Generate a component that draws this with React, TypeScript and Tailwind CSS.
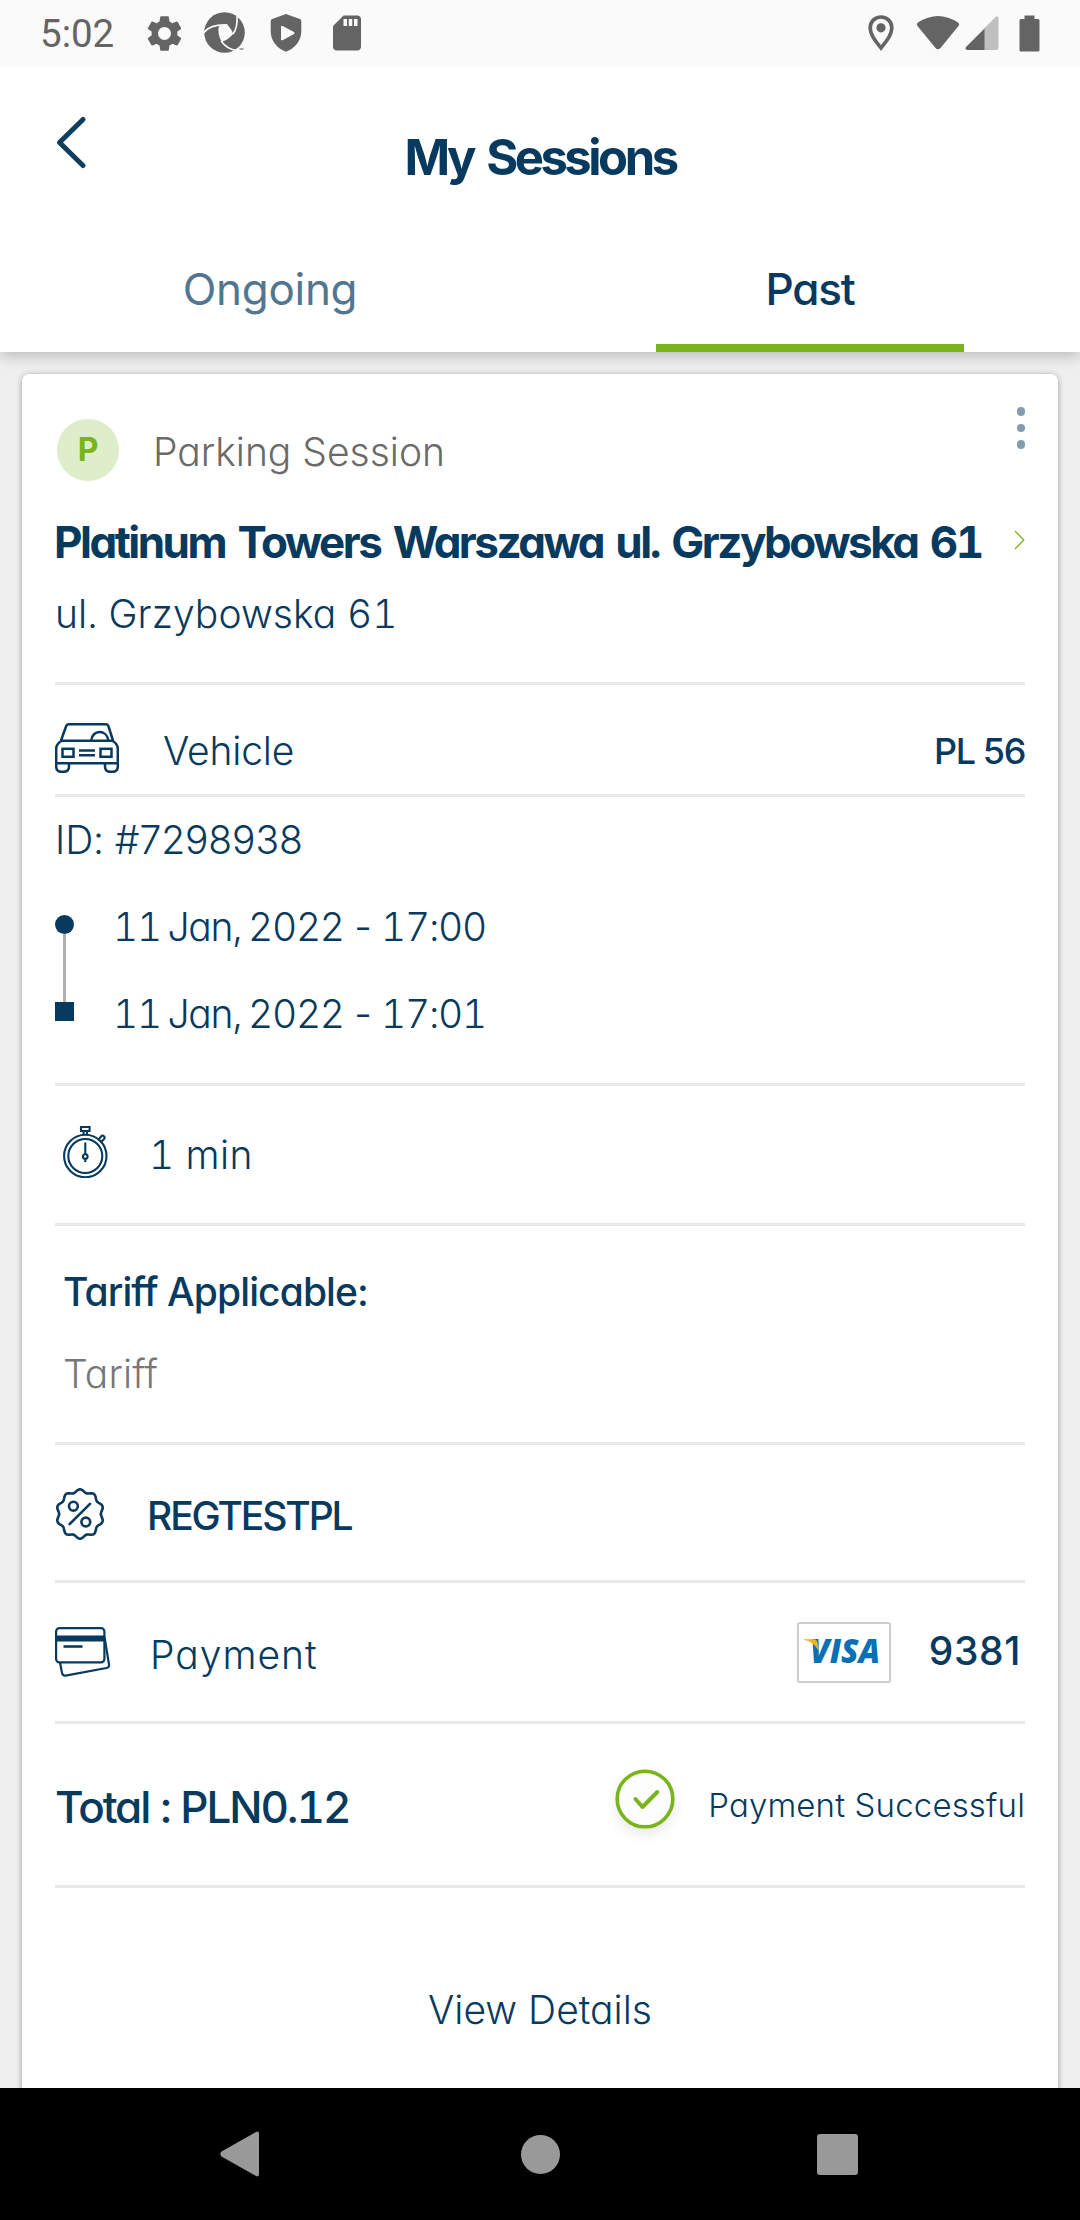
import type { ReactNode } from "react";
import { MdSdCard, MdSettings } from "react-icons/md";

const NAVY = "#073a5e";

function ApertureIcon() {
  return (
    <svg className="ml-[18px]" width="42" height="42" viewBox="0 0 42 42" fill="none">
      <circle cx="20.5" cy="20.5" r="20.3" fill="#646464" />
      <path d="M14.8 14.6Q19 12.6 24 13.2Q27.5 17.5 29.2 21.8Q25 27.5 17.6 29.8Q13.2 22 14.8 14.6Z" fill="#fafafa" />
      <path d="M-0.5 21Q6 12 23.5 13" stroke="#fafafa" strokeWidth="1.7" />
      <path d="M33 2.5Q34 15.5 29 22" stroke="#fafafa" strokeWidth="1.7" />
      <path d="M17.2 29Q23 37.5 33 38.5" stroke="#fafafa" strokeWidth="1.7" />
      <path d="M35.5 37h4" stroke="#8c8c8c" strokeWidth="1.5" />
    </svg>
  );
}

function ShieldPlayIcon() {
  return (
    <svg className="ml-[24px]" width="32" height="38" viewBox="0 0 32 38">
      <path
        fill="#646464"
        fillRule="evenodd"
        d="M16 0L29.8 5Q31.3 5.6 31.3 7.2V17.5C31.3 26.5 25 34.5 16 37.8C7 34.5 .7 26.5 .7 17.5V7.2Q.7 5.6 2.2 5ZM11 12.8V25.3Q11.2 26.8 12.6 26.2L24 20Q25.2 19 24 18.1L12.6 12Q11.2 11.3 11 12.8Z"
      />
    </svg>
  );
}

function StatusBar() {
  return (
    <div className="relative z-20 flex h-[66px] items-center bg-[#fafafa] px-[40px] text-[#646464]">
      <span className="w-[103px] pt-[3px] font-['Roboto',sans-serif] text-[38.5px] font-[450] leading-none">5:02</span>
      <MdSettings size={43} />
      <ApertureIcon />
      <ShieldPlayIcon />
      <MdSdCard size={42} className="ml-[24px]" />
      <svg className="ml-auto" width="26" height="36" viewBox="0 0 26 36">
        <path d="M13 2C6.8 2 2.2 6.7 2.2 12.8C2.2 19.5 7 25.5 13 33C19 25.5 23.8 19.5 23.8 12.8C23.8 6.7 19.2 2 13 2Z" fill="none" stroke="#646464" strokeWidth="3.6" />
        <circle cx="13" cy="12.8" r="4.6" fill="#646464" />
      </svg>
      <svg className="ml-[22px]" width="44" height="36" viewBox="0 0 44 36">
        <path d="M2 7.5Q22 -5.5 42 7.5Q44 9 42.5 11L24.5 33Q22 35.5 19.5 33L1.5 11Q0 9 2 7.5Z" fill="#646464" />
      </svg>
      <svg className="ml-[5px]" width="34" height="36" viewBox="0 0 34 36">
        <path d="M19 13.5L31 1.8Q33.5 .5 33.5 3V33Q33.5 35 31.5 35H19Z" fill="#bfbfbf" />
        <path d="M19.5 13.5V35H2.5Q-.5 34.5 1 32Z" fill="#646464" />
      </svg>
      <svg className="ml-[20px]" width="21" height="37" viewBox="0 0 21 37">
        <path d="M5.5 .5h10v3.5H19q1.5 0 1.5 1.5V35q0 1.5-1.5 1.5H2Q.5 36.5 .5 35V5.5Q.5 4 2 4h3.5Z" fill="#646464" />
      </svg>
    </div>
  );
}

function Header() {
  return (
    <header className="relative z-10 bg-white shadow-[0_4px_14px_rgba(0,0,0,0.22)]">
      <div className="grid h-[167px] grid-cols-[200px_1fr_200px]">
        <svg className="ml-[54px] mt-[49px]" width="34" height="56" viewBox="0 0 34 56" fill="none">
          <path d="M29 4.5L5.5 27.5L29 50.5" stroke="#0f3d5f" strokeWidth="5" strokeLinecap="round" strokeLinejoin="round" />
        </svg>
        <h1 className="flex h-[182px] items-center justify-center whitespace-pre text-[49px] font-bold tracking-[-3.5px] [word-spacing:5px]">My Sessions</h1>
      </div>
      <nav className="grid h-[119px] grid-cols-2 justify-items-center text-[44px]">
        <div className="flex w-[308px] items-center justify-center border-b-8 border-transparent tracking-[-0.3px] text-[#52768f]">Ongoing</div>
        <div className="flex w-[308px] items-center justify-center border-b-8 border-[#78b41a] font-medium tracking-[-1.2px]">Past</div>
      </nav>
    </header>
  );
}

function Section({ className, children }: { className: string; children: ReactNode }) {
  return <section className={"border-b-[3px] border-[#e9e9e9] " + className}>{children}</section>;
}

function CarIcon() {
  return (
    <svg width="64" height="50" viewBox="0 0 64 50" fill="none" stroke={NAVY} strokeWidth="2.5">
      <path d="M6 17.5L11.2 3Q12 1.2 14 1.2H50.5Q52.6 1.2 53.4 3L58 17.5M6 17.8H58" />
      <path d="M6.5 17.8Q1.2 21 1.2 26V40.2H62.8V26Q62.8 21 57.5 17.8" />
      <path d="M1.2 40V43.5Q1.2 48.8 6.5 48.8H8.5Q14 48.8 14 43.5V40M50 40V43.5Q50 48.8 55.5 48.8H57.5Q62.8 48.8 62.8 43.5V40" />
      <path d="M36.3 17.5C37 6.5 51.5 6 53.5 17.5" />
      <rect x="7.5" y="25.8" width="11" height="8" />
      <rect x="45.5" y="25.8" width="11" height="8" />
      <path d="M24 27.6H40M24 32.2H40" />
    </svg>
  );
}

function StopwatchIcon() {
  return (
    <svg width="46" height="52" viewBox="0 0 46 52" fill="none" stroke={NAVY} strokeWidth="2.1">
      <circle cx="22.3" cy="30" r="21.2" />
      <circle cx="22.3" cy="30" r="17" />
      <path d="M18 1H26.6V5H18ZM20.6 5V9M24 5V9" />
      <path d="M35.5 13.8L38.2 10.3Q39.5 9 41 10.3Q42.3 11.5 41 13L38.2 16" />
      <path d="M22.3 16.5V28M22.3 33V36" />
      <circle cx="22.3" cy="30.5" r="2.3" />
    </svg>
  );
}

// Ten-lobed seal outline around a percent sign.
const SEAL =
  Array.from({ length: 120 }, (_, i) => {
    const a = (i / 120) * Math.PI * 2;
    const r = 23.2 + 1.5 * Math.cos(10 * a);
    return `${i ? "L" : "M"}${(25 + r * 0.96 * Math.sin(a)).toFixed(2)} ${(26 - r * Math.cos(a)).toFixed(2)}`;
  }).join("") + "Z";

function DiscountIcon() {
  return (
    <svg width="50" height="52" viewBox="0 0 50 52" fill="none" stroke={NAVY} strokeWidth="2.6" strokeLinecap="round" strokeLinejoin="round">
      <path d={SEAL} />
      <circle cx="18.4" cy="18.2" r="4.4" />
      <circle cx="30.8" cy="34" r="4.4" />
      <path d="M35 15.8L14.6 36.2" />
    </svg>
  );
}

function CardsIcon() {
  return (
    <svg width="56" height="50" viewBox="0 0 56 50" fill="none" stroke={NAVY} strokeWidth="2.2">
      <rect x="1.1" y="1.1" width="48.3" height="34.3" rx="3.5" />
      <path d="M1 11.5H49.5" strokeWidth="6.2" />
      <path d="M8.5 19.5H27.5" strokeWidth="2.6" />
      <path d="M5 35.5L7 46Q7.8 49 10.5 48.6L51.5 41Q54.5 40.3 54 37.5L49.5 10" />
    </svg>
  );
}

function VisaBadge() {
  return (
    <div className="mr-[38px] flex h-[61px] w-[94px] items-center justify-center rounded-[3px] border-2 border-[#cdcdcd]">
      <svg className="mb-[2px] shrink-0 overflow-visible" width="84" height="36" viewBox="0 0 84 36">
        <text x="8" y="30" textLength="70" lengthAdjust="spacingAndGlyphs" className="font-['Open_Sans',sans-serif] text-[33px] font-extrabold italic" fill="#0a6fb5">
          VISA
        </text>
        <path d="M2.5 6.5H12Q14.5 6.5 15 9L16.5 17Q12 9 2.5 6.5Z" fill="#f9b21d" stroke="#f9b21d" strokeWidth=".6" />
      </svg>
    </div>
  );
}

function SessionCard() {
  return (
    <article className="mx-[22px] h-[1730px] rounded-[7px] bg-white px-[33px] shadow-[0_1px_6px_rgba(0,0,0,0.35)]">
      <Section className="h-[311px] pt-[33px]">
        <div className="flex h-[78px] items-start">
          <div className="ml-[2px] mt-[12px] flex size-[62px] items-center justify-center rounded-full bg-[#deeecb] text-[32px] font-bold text-[#78b41a]">P</div>
          <div className="ml-[34px] mt-[12px] flex h-[65px] items-center text-[39px] font-[350] text-[#6a6a6a]">Parking Session</div>
          <div className="ml-auto flex flex-col gap-[8px]">
            <i className="size-[8.5px] rounded-full bg-[#829cb0]" />
            <i className="size-[8.5px] rounded-full bg-[#829cb0]" />
            <i className="size-[8.5px] rounded-full bg-[#829cb0]" />
          </div>
        </div>
        <div className="flex h-[114px] items-center justify-between">
          <h2 className="ml-[-1px] whitespace-nowrap text-[44px] font-bold tabular-nums tracking-[-2.5px] [word-spacing:3px]">Platinum Towers Warszawa ul. Grzybowska 61</h2>
          <svg className="mb-[4px]" width="11" height="20" viewBox="0 0 11 20" fill="none">
            <path d="M1 1L9.8 10L1 19" stroke="#78b41a" strokeWidth="1.3" />
          </svg>
        </div>
        <div className="flex h-[28px] items-center whitespace-pre text-[39px] font-[350] tabular-nums tracking-[0.1px]">ul. Grzybowska 61</div>
      </Section>

      <Section className="flex h-[112px] items-center pt-[17px]">
        <CarIcon />
        <span className="ml-[44px] pt-[4px] text-[39px] font-[350] tracking-[-0.2px]">Vehicle</span>
        <span className="ml-auto pt-[5px] text-[36px] font-medium tracking-[-1.4px]">PL 56</span>
      </Section>

      <Section className="h-[289px] text-[39px] font-[350]">
        <div className="flex h-[85px] items-center tracking-[-0.1px]">ID: #7298938</div>
        <div className="flex pt-px">
          <div className="flex w-[19px] flex-col items-center pt-[32px]">
            <i className="size-[19px] rounded-full bg-[#073a5e]" />
            <i className="h-[68px] w-[3px] bg-[#b1b1b1]" />
            <i className="size-[19px] bg-[#073a5e]" />
          </div>
          <div className="ml-[39px] tabular-nums tracking-[-1.3px] [word-spacing:-2.5px]">
            <div className="flex h-[87px] items-center">11 Jan, 2022 - 17:00</div>
            <div className="flex h-[87px] items-center">11 Jan, 2022 - 17:01</div>
          </div>
        </div>
      </Section>

      <Section className="flex h-[140px] items-center pl-[8px]">
        <div className="mb-[5px]">
          <StopwatchIcon />
        </div>
        <span className="ml-[40px] text-[39px] font-[350] tabular-nums tracking-[0.4px]">1 min</span>
      </Section>

      <Section className="h-[219px] pl-[8px] pt-[24px] text-[39px]">
        <div className="flex h-[82px] items-center font-medium tracking-[-0.9px]">Tariff Applicable:</div>
        <div className="flex h-[82px] items-center font-[350] tracking-[0.1px] text-[#777777]">Tariff</div>
      </Section>

      <Section className="flex h-[138px] items-center pt-[3px]">
        <DiscountIcon />
        <span className="ml-[42px] pt-[3px] text-[39px] font-medium tracking-[-2.1px]">REGTESTPL</span>
      </Section>

      <Section className="flex h-[141px] items-center">
        <CardsIcon />
        <span className="ml-[39px] pt-[4px] text-[39px] font-[350] tracking-[1px]">Payment</span>
        <div className="ml-auto flex items-center pr-[4px]">
          <VisaBadge />
          <span className="pb-[3px] text-[39px] font-medium tracking-[0.6px]">9381</span>
        </div>
      </Section>

      <Section className="flex h-[164px] items-center">
        <span className="pt-[5px] text-[44px] font-medium tabular-nums tracking-[-2.1px] [word-spacing:1px]">Total : PLN0.12</span>
        <div className="mb-[12px] ml-auto">
          <svg className="drop-shadow-[0_6px_6px_rgba(0,0,0,0.08)]" width="60" height="60" viewBox="0 0 60 60" fill="none">
            <circle cx="30" cy="30" r="27.8" fill="#fdfdfd" stroke="#78b41a" strokeWidth="3.6" />
            <path d="M20.5 30L27.5 38L42.3 23" stroke="#78b41a" strokeWidth="4" strokeLinecap="round" strokeLinejoin="round" />
          </svg>
        </div>
        <span className="ml-[33px] pt-[2px] text-[33px] font-[350] tracking-[0.15px]">Payment Successful</span>
      </Section>

      <div className="flex h-[200px] items-center justify-center pt-[42px] text-[39px] font-[350]">View Details</div>
    </article>
  );
}

function NavigationBar() {
  return (
    <div className="relative z-10 grid h-[132px] grid-cols-[478px_124px_478px] items-center bg-black">
      <svg className="ml-[220px]" width="40" height="46" viewBox="0 0 40 46">
        <path d="M1.5 20.5L36 1Q39 -.5 39 3V43Q39 46.5 36 45L1.5 25.5Q-.8 23 1.5 20.5Z" fill="#999" />
      </svg>
      <i className="mx-auto size-[39px] rounded-full bg-[#999]" />
      <i className="ml-[215px] size-[41px] rounded-[3px] bg-[#999]" />
    </div>
  );
}

export default function App() {
  return (
    <div className="flex h-[2220px] w-[1080px] flex-col overflow-hidden bg-[#efefef] font-['Inter',sans-serif] leading-none text-[#073a5e] [font-feature-settings:'cv11']">
      <StatusBar />
      <Header />
      <main className="h-[1736px] overflow-hidden pt-[22px]">
        <SessionCard />
      </main>
      <NavigationBar />
    </div>
  );
}
